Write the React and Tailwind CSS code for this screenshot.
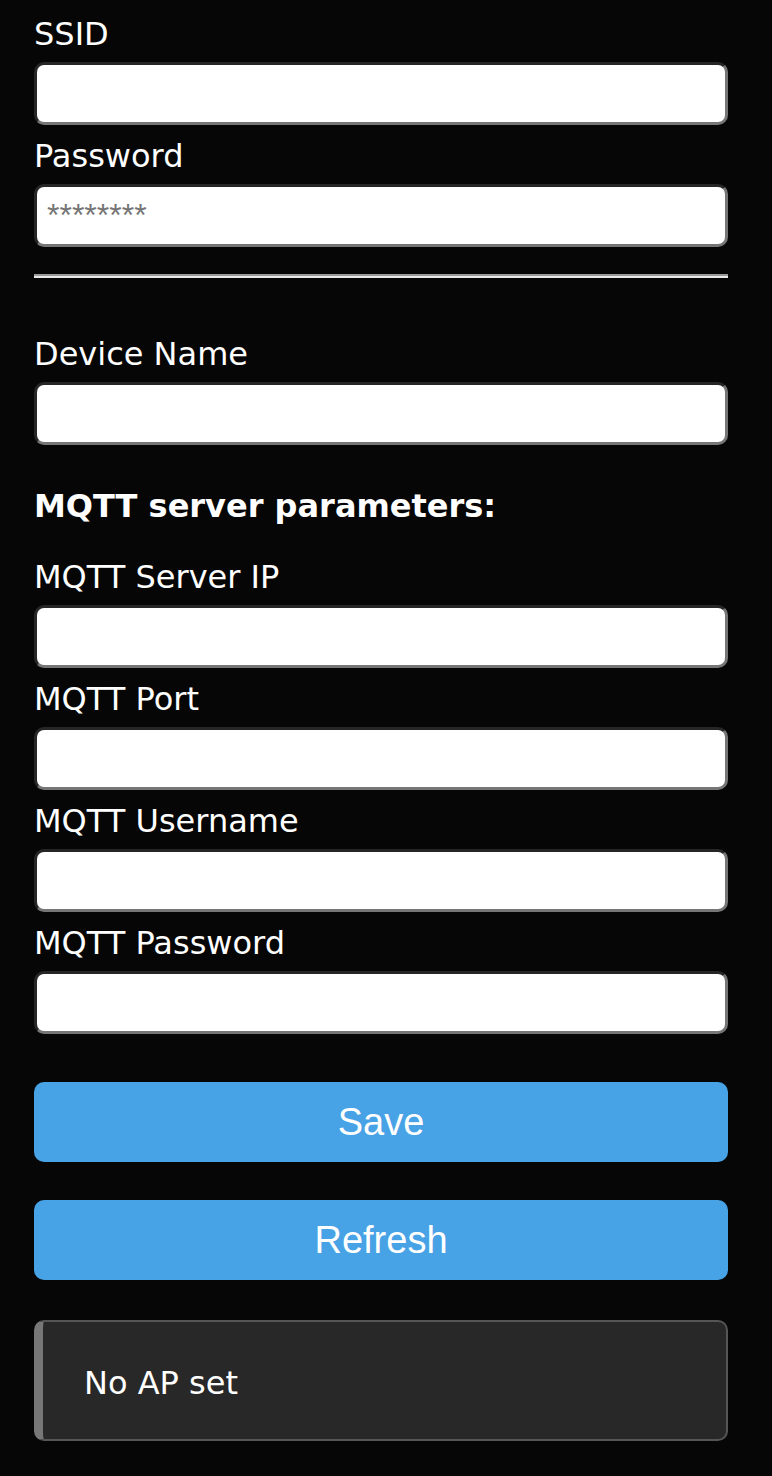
import React from "react";

const labelCls = "block text-[32px] leading-[38px] text-white";
const inputCls =
  "block w-full h-[63px] mt-[9px] rounded-[10px] bg-white border-[3px] border-t-[#262626] border-l-[#262626] border-r-[#767676] border-b-[#767676] px-[10px] text-[32px] text-black placeholder:text-[#757575] outline-none";

function Field({ label, placeholder, mb = "mb-[12px]" }) {
  return (
    <div className={mb}>
      <label className={labelCls} style={{ fontFamily: '"DejaVu Sans", Verdana, sans-serif' }}>
        {label}
      </label>
      <input
        type="text"
        placeholder={placeholder}
        className={inputCls}
        style={{ fontFamily: '"Liberation Sans", Arial, sans-serif' }}
      />
    </div>
  );
}

export default function App() {
  return (
    <div className="min-h-[1476px] w-full bg-[#060606]">
      <div className="pl-[34px] pr-[44px] pt-[15px]" style={{ fontFamily: '"DejaVu Sans", Verdana, sans-serif' }}>
        <Field label="SSID" />
        <Field label="Password" placeholder="********" mb="mb-0" />
        <div className="mt-[27px] h-0 border-t-2 border-b-2 border-t-[#9a9a9a] border-b-[#e8e8e8]" />
        <div className="mt-[57px]">
          <Field label="Device Name" mb="mb-0" />
        </div>
        <div className="mt-[42px] text-[32px] leading-[38px] font-bold text-white">MQTT server parameters:</div>
        <div className="mt-[33px]">
          <Field label="MQTT Server IP" />
          <Field label="MQTT Port" />
          <Field label="MQTT Username" />
          <Field label="MQTT Password" mb="mb-0" />
        </div>
        <button
          className="mt-[48px] block w-full h-[80px] rounded-[10px] bg-[#48a2e6] text-white text-[38px] leading-[80px]"
          style={{ fontFamily: '"Liberation Sans", Arial, sans-serif' }}
        >
          Save
        </button>
        <button
          className="mt-[38px] block w-full h-[80px] rounded-[10px] bg-[#48a2e6] text-white text-[38px] leading-[80px]"
          style={{ fontFamily: '"Liberation Sans", Arial, sans-serif' }}
        >
          Refresh
        </button>
        <div className="mt-[40px] rounded-[10px] border-2 border-[#555555] border-l-[9px] border-l-[#777777] bg-[#282828] pl-[41px] pt-[43px] pb-[37px] text-[32px] leading-[37px] text-white">
          No AP set
        </div>
      </div>
    </div>
  );
}
